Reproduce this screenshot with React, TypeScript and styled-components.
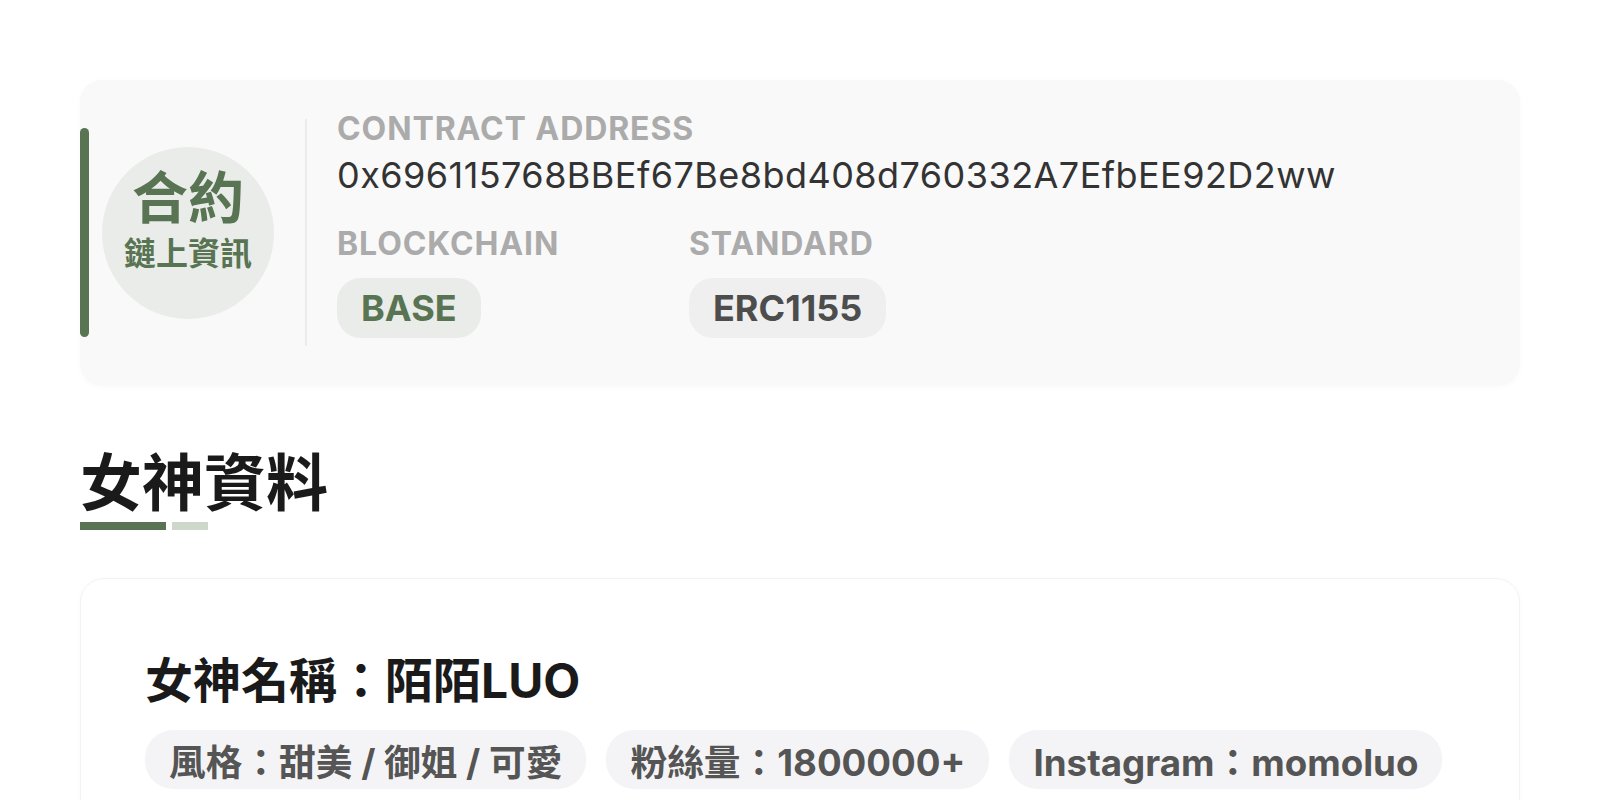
import styled, { createGlobalStyle } from 'styled-components';

const GlobalStyle = createGlobalStyle`
  html, body {
    margin: 0;
    padding: 0;
    background: #ffffff;
  }
  body {
    font-family: Inter, "Noto Sans CJK TC", "Noto Sans", sans-serif;
    color: #1a1a1a;
  }
`;

const Page = styled.div`
  padding: 80px 80px 0;
  display: flex;
  flex-direction: column;
`;

const ContractCard = styled.section`
  display: flex;
  align-items: center;
  padding: 39px 0 40px;
  background: #f9f9f9;
  border-radius: 22px;
  box-shadow: 0 1px 6px rgba(0, 0, 0, 0.025);
`;

const AccentBar = styled.div`
  align-self: stretch;
  width: 9px;
  margin: 9px 0;
  border-radius: 5px;
  background: #587453;
`;

const Badge = styled.div`
  box-sizing: border-box;
  width: 172px;
  height: 172px;
  margin-left: 13px;
  padding-bottom: 34px;
  border-radius: 50%;
  background: #e9ece8;
  color: #587453;
  display: flex;
  flex-direction: column;
  align-items: center;
  justify-content: center;
  gap: 5px;
  font-family: "Noto Sans CJK TC", sans-serif;
  font-weight: 700;
`;

const BadgeTitle = styled.div`
  font-size: 56px;
  line-height: 1.2;
`;

const BadgeSub = styled.div`
  font-size: 32px;
  line-height: 1.2;
`;

const Divider = styled.div`
  align-self: stretch;
  width: 2px;
  margin-left: 31px;
  background: #ececec;
`;

const Info = styled.div`
  display: flex;
  flex-direction: column;
  margin: -8px 0 8px 30px;
`;

const Label = styled.div`
  font-size: 32px;
  line-height: 36px;
  font-weight: 700;
  letter-spacing: 0.9px;
  color: #ababab;
`;

const Address = styled.div`
  margin-top: 6px;
  font-size: 36px;
  line-height: 44px;
  font-weight: 400;
  letter-spacing: 0.45px;
  color: #333333;
`;

const MetaRow = styled.div`
  display: grid;
  grid-template-columns: 352px auto;
  margin-top: 29px;
`;

const MetaItem = styled.div`
  display: flex;
  flex-direction: column;
  align-items: flex-start;
  gap: 16px;
`;

const Chip = styled.span<{ $accent?: boolean }>`
  display: inline-flex;
  align-items: center;
  height: 60px;
  padding: 0 24px;
  border-radius: 24px;
  font-size: 36px;
  font-weight: 700;
  color: ${({ $accent }) => ($accent ? '#587453' : '#4d4d4d')};
  background: ${({ $accent }) => ($accent ? '#e9ece8' : '#efefef')};
`;

const SectionTitle = styled.h2`
  margin: 55px 0 0;
  font-family: "Noto Sans CJK TC", sans-serif;
  font-size: 62px;
  line-height: 77px;
  font-weight: 700;
  color: #1a1a1a;
`;

const TitleRule = styled.div`
  display: flex;
  gap: 6px;
  margin-top: 4px;
`;

const RuleSegment = styled.span<{ $w: number; $light?: boolean }>`
  width: ${({ $w }) => $w}px;
  height: 8px;
  background: ${({ $light }) => ($light ? '#cdd8cb' : '#587453')};
`;

const ProfileCard = styled.section`
  margin-top: 48px;
  padding: 73px 64px 40px;
  background: #ffffff;
  border: 1px solid #f3f3f3;
  border-radius: 24px;
  box-shadow: 0 1px 8px rgba(0, 0, 0, 0.025);
`;

const ProfileName = styled.h3`
  margin: 0;
  font-size: 48px;
  line-height: 58px;
  font-weight: 700;
  color: #1a1a1a;
`;

const TagRow = styled.div`
  display: flex;
  flex-wrap: wrap;
  gap: 20px;
  margin-top: 20px;
`;

const Tag = styled.span`
  display: inline-flex;
  align-items: center;
  height: 59px;
  padding: 0 24px;
  border-radius: 28px;
  background: #f4f4f6;
  color: #555555;
  font-size: 36.7px;
  font-weight: 700;
  white-space: nowrap;
`;

const tags = ['風格：甜美 / 御姐 / 可愛', '粉絲量：1800000+', 'Instagram：momoluo'];

export default function App() {
  return (
    <>
      <GlobalStyle />
      <Page>
        <ContractCard>
          <AccentBar />
          <Badge>
            <BadgeTitle>合約</BadgeTitle>
            <BadgeSub>鏈上資訊</BadgeSub>
          </Badge>
          <Divider />
          <Info>
            <Label>CONTRACT ADDRESS</Label>
            <Address>0x696115768BBEf67Be8bd408d760332A7EfbEE92D2ww</Address>
            <MetaRow>
              <MetaItem>
                <Label>BLOCKCHAIN</Label>
                <Chip $accent>BASE</Chip>
              </MetaItem>
              <MetaItem>
                <Label>STANDARD</Label>
                <Chip>ERC1155</Chip>
              </MetaItem>
            </MetaRow>
          </Info>
        </ContractCard>

        <SectionTitle>女神資料</SectionTitle>
        <TitleRule>
          <RuleSegment $w={86} />
          <RuleSegment $w={36} $light />
        </TitleRule>

        <ProfileCard>
          <ProfileName>女神名稱：陌陌LUO</ProfileName>
          <TagRow>
            {tags.map((t) => (
              <Tag key={t}>{t}</Tag>
            ))}
          </TagRow>
        </ProfileCard>
      </Page>
    </>
  );
}
